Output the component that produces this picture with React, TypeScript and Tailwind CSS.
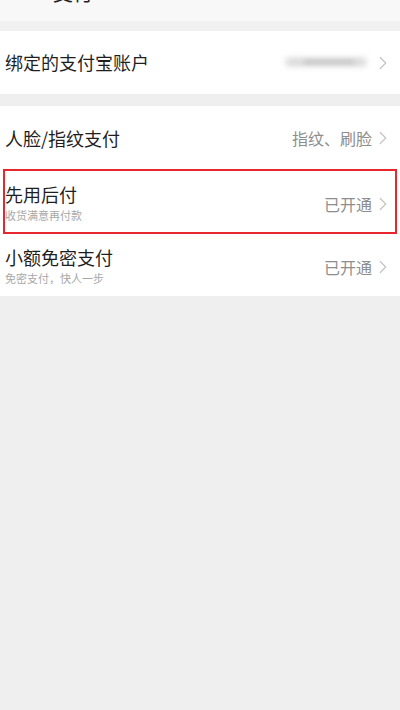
import { ChevronRight } from "lucide-react";

const font = { fontFamily: '"Noto Sans CJK SC", "Noto Sans", sans-serif' };

function Chevron() {
  return <ChevronRight className="w-[22px] h-[22px] text-[#c4c4c4]" strokeWidth={1.3} />;
}

function Row({
  title,
  sub,
  value,
  inset = "h-[62px] pl-[5px] pr-[6px]",
}: {
  title: string;
  sub?: string;
  value?: string;
  inset?: string;
}) {
  return (
    <div className={`flex items-center justify-between ${inset}`}>
      <div className="flex flex-col">
        <span className="text-[18px] leading-[24px] text-[#1f1f1f]">{title}</span>
        {sub && <span className="text-[11px] leading-[14px] text-[#a8a8a8] mt-[2px]">{sub}</span>}
      </div>
      <div className={`flex items-center ${sub ? "mt-[4px]" : ""}`}>
        {value && <span className="text-[16px] text-[#8e8e8e]">{value}</span>}
        <Chevron />
      </div>
    </div>
  );
}

export default function App() {
  return (
    <div className="min-h-[710px] bg-[#efefef]" style={font}>
      {/* Cut-off title bar */}
      <div className="h-[21px] bg-[#f8f8f8] overflow-hidden">
        <div className="pl-[53px] -mt-[18px] text-[20px] leading-[21px] text-[#222]">支付</div>
      </div>
      <div className="h-[10px] bg-[#f1f1f1]" />

      {/* Bound account */}
      <div className="bg-white h-[63px] flex items-center justify-between pl-[5px] pr-[6px]">
        <span className="text-[18px] text-[#1f1f1f]">绑定的支付宝账户</span>
        <div className="flex items-center">
          <div className="relative w-[90px] h-[18px]">
            <div className="absolute left-[4px] top-[4px] w-[80px] h-[8px] bg-[#d6d6d6] blur-[3px]" />
            <div className="absolute left-[22px] top-[6px] w-[50px] h-[4px] bg-[#c8c8c8] blur-[2px]" />
          </div>
          <Chevron />
        </div>
      </div>
      <div className="h-[12px]" />

      <div className="bg-white">
        <Row title="人脸/指纹支付" value="指纹、刷脸" inset="h-[63px] pl-[5px] pr-[6px]" />
        <div className="px-[3px]">
          <div className="border-2 border-[#e8262e]">
            <Row title="先用后付" sub="收货满意再付款" value="已开通" inset="h-[61px] pl-0 pr-[1px]" />
          </div>
        </div>
        <Row title="小额免密支付" sub="免密支付，快人一步" value="已开通" />
      </div>
    </div>
  );
}
